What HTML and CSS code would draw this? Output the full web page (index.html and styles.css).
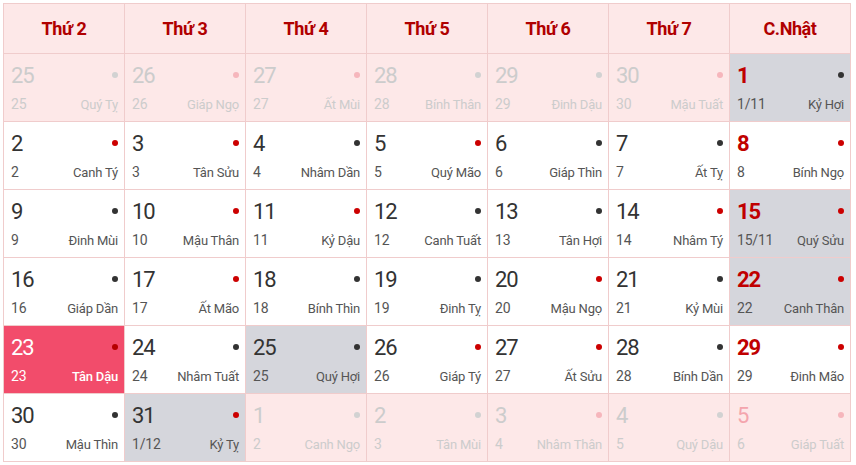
FILE: index.html
```html
<!DOCTYPE html>
<html lang="vi">
<head>
<meta charset="utf-8">
<title>Lịch tháng</title>
<link rel="stylesheet" href="styles.css">
</head>
<body>
<div class="cal">
  <div class="hd">Thứ 2</div><div class="hd">Thứ 3</div><div class="hd">Thứ 4</div><div class="hd">Thứ 5</div><div class="hd">Thứ 6</div><div class="hd">Thứ 7</div><div class="hd">C.Nhật</div>

  <div class="c off"><div class="t"><span class="n">25</span><i class="d g"></i></div><div class="b"><span>25</span><span>Quý Tỵ</span></div></div>
  <div class="c off"><div class="t"><span class="n">26</span><i class="d p"></i></div><div class="b"><span>26</span><span>Giáp Ngọ</span></div></div>
  <div class="c off"><div class="t"><span class="n">27</span><i class="d p"></i></div><div class="b"><span>27</span><span>Ất Mùi</span></div></div>
  <div class="c off"><div class="t"><span class="n">28</span><i class="d g"></i></div><div class="b"><span>28</span><span>Bính Thân</span></div></div>
  <div class="c off"><div class="t"><span class="n">29</span><i class="d g"></i></div><div class="b"><span>29</span><span>Đinh Dậu</span></div></div>
  <div class="c off"><div class="t"><span class="n">30</span><i class="d p"></i></div><div class="b"><span>30</span><span>Mậu Tuất</span></div></div>
  <div class="c sun gr"><div class="t"><span class="n">1</span><i class="d k"></i></div><div class="b"><span>1/11</span><span>Kỷ Hợi</span></div></div>

  <div class="c"><div class="t"><span class="n">2</span><i class="d r"></i></div><div class="b"><span>2</span><span>Canh Tý</span></div></div>
  <div class="c"><div class="t"><span class="n">3</span><i class="d r"></i></div><div class="b"><span>3</span><span>Tân Sửu</span></div></div>
  <div class="c"><div class="t"><span class="n">4</span><i class="d k"></i></div><div class="b"><span>4</span><span>Nhâm Dần</span></div></div>
  <div class="c"><div class="t"><span class="n">5</span><i class="d r"></i></div><div class="b"><span>5</span><span>Quý Mão</span></div></div>
  <div class="c"><div class="t"><span class="n">6</span><i class="d k"></i></div><div class="b"><span>6</span><span>Giáp Thìn</span></div></div>
  <div class="c"><div class="t"><span class="n">7</span><i class="d k"></i></div><div class="b"><span>7</span><span>Ất Tỵ</span></div></div>
  <div class="c sun"><div class="t"><span class="n">8</span><i class="d r"></i></div><div class="b"><span>8</span><span>Bính Ngọ</span></div></div>

  <div class="c"><div class="t"><span class="n">9</span><i class="d k"></i></div><div class="b"><span>9</span><span>Đinh Mùi</span></div></div>
  <div class="c"><div class="t"><span class="n">10</span><i class="d r"></i></div><div class="b"><span>10</span><span>Mậu Thân</span></div></div>
  <div class="c"><div class="t"><span class="n">11</span><i class="d r"></i></div><div class="b"><span>11</span><span>Kỷ Dậu</span></div></div>
  <div class="c"><div class="t"><span class="n">12</span><i class="d k"></i></div><div class="b"><span>12</span><span>Canh Tuất</span></div></div>
  <div class="c"><div class="t"><span class="n">13</span><i class="d k"></i></div><div class="b"><span>13</span><span>Tân Hợi</span></div></div>
  <div class="c"><div class="t"><span class="n">14</span><i class="d r"></i></div><div class="b"><span>14</span><span>Nhâm Tý</span></div></div>
  <div class="c sun gr"><div class="t"><span class="n">15</span><i class="d r"></i></div><div class="b"><span>15/11</span><span>Quý Sửu</span></div></div>

  <div class="c"><div class="t"><span class="n">16</span><i class="d k"></i></div><div class="b"><span>16</span><span>Giáp Dần</span></div></div>
  <div class="c"><div class="t"><span class="n">17</span><i class="d r"></i></div><div class="b"><span>17</span><span>Ất Mão</span></div></div>
  <div class="c"><div class="t"><span class="n">18</span><i class="d k"></i></div><div class="b"><span>18</span><span>Bính Thìn</span></div></div>
  <div class="c"><div class="t"><span class="n">19</span><i class="d k"></i></div><div class="b"><span>19</span><span>Đinh Tỵ</span></div></div>
  <div class="c"><div class="t"><span class="n">20</span><i class="d r"></i></div><div class="b"><span>20</span><span>Mậu Ngọ</span></div></div>
  <div class="c"><div class="t"><span class="n">21</span><i class="d k"></i></div><div class="b"><span>21</span><span>Kỷ Mùi</span></div></div>
  <div class="c sun gr"><div class="t"><span class="n">22</span><i class="d r"></i></div><div class="b"><span>22</span><span>Canh Thân</span></div></div>

  <div class="c today"><div class="t"><span class="n">23</span><i class="d r"></i></div><div class="b"><span>23</span><span>Tân Dậu</span></div></div>
  <div class="c"><div class="t"><span class="n">24</span><i class="d k"></i></div><div class="b"><span>24</span><span>Nhâm Tuất</span></div></div>
  <div class="c gr"><div class="t"><span class="n">25</span><i class="d k"></i></div><div class="b"><span>25</span><span>Quý Hợi</span></div></div>
  <div class="c"><div class="t"><span class="n">26</span><i class="d r"></i></div><div class="b"><span>26</span><span>Giáp Tý</span></div></div>
  <div class="c"><div class="t"><span class="n">27</span><i class="d r"></i></div><div class="b"><span>27</span><span>Ất Sửu</span></div></div>
  <div class="c"><div class="t"><span class="n">28</span><i class="d k"></i></div><div class="b"><span>28</span><span>Bính Dần</span></div></div>
  <div class="c sun"><div class="t"><span class="n">29</span><i class="d r"></i></div><div class="b"><span>29</span><span>Đinh Mão</span></div></div>

  <div class="c"><div class="t"><span class="n">30</span><i class="d k"></i></div><div class="b"><span>30</span><span>Mậu Thìn</span></div></div>
  <div class="c gr"><div class="t"><span class="n">31</span><i class="d r"></i></div><div class="b"><span>1/12</span><span>Kỷ Tỵ</span></div></div>
  <div class="c off"><div class="t"><span class="n">1</span><i class="d g"></i></div><div class="b"><span>2</span><span>Canh Ngọ</span></div></div>
  <div class="c off"><div class="t"><span class="n">2</span><i class="d g"></i></div><div class="b"><span>3</span><span>Tân Mùi</span></div></div>
  <div class="c off"><div class="t"><span class="n">3</span><i class="d p"></i></div><div class="b"><span>4</span><span>Nhâm Thân</span></div></div>
  <div class="c off"><div class="t"><span class="n">4</span><i class="d g"></i></div><div class="b"><span>5</span><span>Quý Dậu</span></div></div>
  <div class="c off sun"><div class="t"><span class="n">5</span><i class="d p"></i></div><div class="b"><span>6</span><span>Giáp Tuất</span></div></div>
</div>
</body>
</html>
```

FILE: styles.css
```css
html, body {
  margin: 0;
  padding: 0;
  background: #ffffff;
}
body {
  padding: 3px 0 0 3px;
  font-family: Roboto, "Liberation Sans", sans-serif;
}
.cal {
  display: grid;
  grid-template-columns: repeat(7, 121px);
  grid-template-rows: 50px repeat(6, 68px);
  width: 848px;
  box-sizing: border-box;
  border-top: 1px solid #f0cccc;
  border-left: 1px solid #f0cccc;
}
.hd, .c {
  border-right: 1px solid #f0cccc;
  border-bottom: 1px solid #f0cccc;
  box-sizing: border-box;
}
.hd {
  background: #fde8e8;
  color: #b00000;
  font-weight: bold;
  font-size: 18px;
  letter-spacing: -0.4px;
  display: flex;
  align-items: center;
  justify-content: center;
  padding-bottom: 1px;
}
.c {
  background: #ffffff;
  display: flex;
  flex-direction: column;
  padding: 8px 6px 0 7px;
  color: #333333;
}
.t {
  display: flex;
  align-items: center;
  justify-content: space-between;
  height: 28px;
}
.n {
  font-size: 22px;
  line-height: 28px;
  letter-spacing: -1px;
}
.d {
  width: 6px;
  height: 6px;
  border-radius: 50%;
  margin-top: -2px;
}
.d.r { background: #cc0000; }
.d.k { background: #333333; }
.d.g { background: #d2d2d2; }
.d.p { background: #f6b6bc; }
.b {
  display: flex;
  justify-content: space-between;
  align-items: baseline;
  font-size: 13px;
  line-height: 16px;
  margin-top: 6px;
  color: #555555;
  letter-spacing: -0.2px;
}
.b span:first-child {
  font-size: 14px;
}
.sun .n {
  color: #c00000;
  font-weight: bold;
}
.gr {
  background: #d5d6dc;
}
.off {
  background: #fde8e8;
}
.off .n, .off .b {
  color: #cccccc;
}
.off.sun .n {
  color: #f4a5ad;
  font-weight: normal;
}
.today {
  background: #f24c6b;
}
.today .n, .today .b {
  color: #ffffff;
}
.today .b span:last-child {
  font-weight: 500;
}
.today .d.r {
  background: #b50000;
}
```
